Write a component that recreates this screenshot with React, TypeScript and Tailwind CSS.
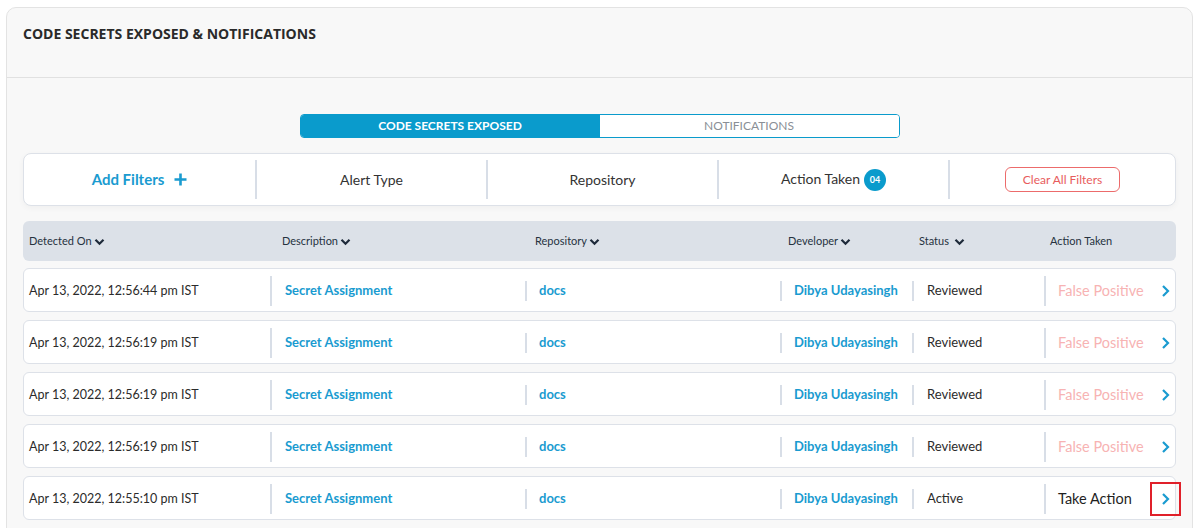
import React from 'react';

/* ── Data ── */
const ROWS = [
  { date: 'Apr 13, 2022, 12:56:44 pm IST', status: 'Reviewed', action: 'False Positive' },
  { date: 'Apr 13, 2022, 12:56:19 pm IST', status: 'Reviewed', action: 'False Positive' },
  { date: 'Apr 13, 2022, 12:56:19 pm IST', status: 'Reviewed', action: 'False Positive' },
  { date: 'Apr 13, 2022, 12:56:19 pm IST', status: 'Reviewed', action: 'False Positive' },
  { date: 'Apr 13, 2022, 12:55:10 pm IST', status: 'Active', action: 'Take Action' },
];

const Caret = () => (
  <svg width="11" height="8" viewBox="0 0 11 8" className="ml-[2px] inline-block">
    <path d="M1.5 1.8 L5.5 5.8 L9.5 1.8" fill="none" stroke="#1e2a3a" strokeWidth="2.2" />
  </svg>
);

const Chevron = () => (
  <svg width="9" height="14" viewBox="0 0 9 14">
    <path d="M2 2 L7 7 L2 12" fill="none" stroke="#1a9bd0" strokeWidth="2.2" />
  </svg>
);

export default function App() {
  return (
    <div className="min-h-[528px] bg-white pt-[7px] pl-[6px] pr-[6px] font-['Lato',sans-serif]">
      <div className="rounded-t-[10px] border border-[#e3e3e3] bg-[#f8f8f8] pb-[20px]">
        {/* ── Header ── */}
        <div className="flex h-[70px] items-start border-b border-[#e1e1e1] px-[16px] pt-[15px]">
          <h1 className="font-['Open_Sans',sans-serif] text-[14px] font-bold text-[#2a2a2a]">
            CODE SECRETS EXPOSED &amp; NOTIFICATIONS
          </h1>
        </div>

        {/* ── Tabs ── */}
        <div className="mt-[36px] flex justify-center">
          <div className="flex h-[24px] w-[600px] overflow-hidden rounded-[4px] border border-[#0a9bcc]">
            <div className="flex w-1/2 items-center justify-center bg-[#0a9bcc] text-[12px] font-bold text-white">
              CODE SECRETS EXPOSED
            </div>
            <div className="flex w-1/2 items-center justify-center bg-white text-[12px] text-[#8a8f96]">
              NOTIFICATIONS
            </div>
          </div>
        </div>

        <div className="px-[16px]">
          {/* ── Filter bar ── */}
          <div className="mt-[15px] flex h-[53px] items-center rounded-[8px] border border-[#dde1e8] bg-white shadow-[0_2px_6px_rgba(0,0,0,0.04)]">
            <div className="flex w-[231px] items-center justify-center gap-[10px] text-[15px] font-bold text-[#1a9bd0]">
              Add Filters
              <svg width="13" height="13" viewBox="0 0 13 13">
                <path d="M6.5 0.5 V12.5 M0.5 6.5 H12.5" stroke="#1a9bd0" strokeWidth="2.6" />
              </svg>
            </div>
            <div className="flex h-[39px] w-[231px] items-center justify-center border-l-2 border-[#d8dee7] text-[14px] text-[#333]">
              Alert Type
            </div>
            <div className="flex h-[39px] w-[231px] items-center justify-center border-l-2 border-[#d8dee7] text-[14px] text-[#333]">
              Repository
            </div>
            <div className="flex h-[39px] w-[231px] items-center justify-center gap-[4px] border-l-2 border-[#d8dee7] text-[14px] text-[#333]">
              <span className="-mt-[2px]">Action Taken</span>
              <span className="flex h-[22px] w-[22px] items-center justify-center rounded-full bg-[#0a9bcc] text-[9px] font-bold text-white">
                04
              </span>
            </div>
            <div className="flex h-[39px] flex-1 items-center justify-center border-l-2 border-[#d8dee7]">
              <button className="h-[25px] w-[115px] rounded-[6px] border border-[#ec6b6b] text-[12px] text-[#e85c5c]">
                Clear All Filters
              </button>
            </div>
          </div>

          {/* ── Table header ── */}
          <div className="mt-[15px] grid h-[40px] grid-cols-[253px_253px_253px_131px_131px_1fr] items-center rounded-[6px] bg-[#dce1e8] pl-[6px] text-[11px] text-[#26323f]">
            <span>Detected On<Caret /></span>
            <span>Description<Caret /></span>
            <span>Repository<Caret /></span>
            <span>Developer<Caret /></span>
            <span>Status <Caret /></span>
            <span>Action Taken</span>
          </div>

          {/* ── Rows ── */}
          <div className="mt-[7px] flex flex-col gap-[8px]">
            {ROWS.map((r, i) => {
              const last = i === ROWS.length - 1;
              return (
                <div
                  key={i}
                  className="grid h-[44px] grid-cols-[246px_255px_255px_132px_132px_1fr] items-center rounded-[6px] border border-[#dde1e8] bg-white pt-[2px] text-[13px]"
                >
                  <div className="whitespace-nowrap pl-[5px] text-[12.5px] text-[#2b2b2b]">{r.date}</div>
                  <div className="flex h-[30px] items-center border-l-2 border-[#d8dee7] pl-[13px] font-bold text-[#1a9bd0]">
                    Secret Assignment
                  </div>
                  <div className="flex h-[20px] items-center border-l-2 border-[#d8dee7] pl-[12px] font-bold text-[#1a9bd0]">
                    docs
                  </div>
                  <div className="flex h-[20px] items-center whitespace-nowrap border-l-2 border-[#d8dee7] pl-[12px] font-bold text-[#1a9bd0]">
                    Dibya Udayasingh
                  </div>
                  <div className="flex h-[20px] items-center border-l-2 border-[#d8dee7] pl-[13px] text-[#2b2b2b]">
                    {r.status}
                  </div>
                  <div className="flex h-[30px] items-center border-l-2 border-[#d8dee7] pl-[12px]">
                    <span className={`whitespace-nowrap text-[14.5px] ${last ? 'text-[#1f1f1f]' : 'text-[#f7b3b3]'}`}>
                      {r.action}
                    </span>
                    <span
                      className={`ml-auto mr-[-6px] flex h-[34px] w-[31px] shrink-0 items-center justify-center ${
                        last ? 'border-2 border-[#e0202a]' : ''
                      }`}
                    >
                      <Chevron />
                    </span>
                  </div>
                </div>
              );
            })}
          </div>
        </div>
      </div>
    </div>
  );
}
